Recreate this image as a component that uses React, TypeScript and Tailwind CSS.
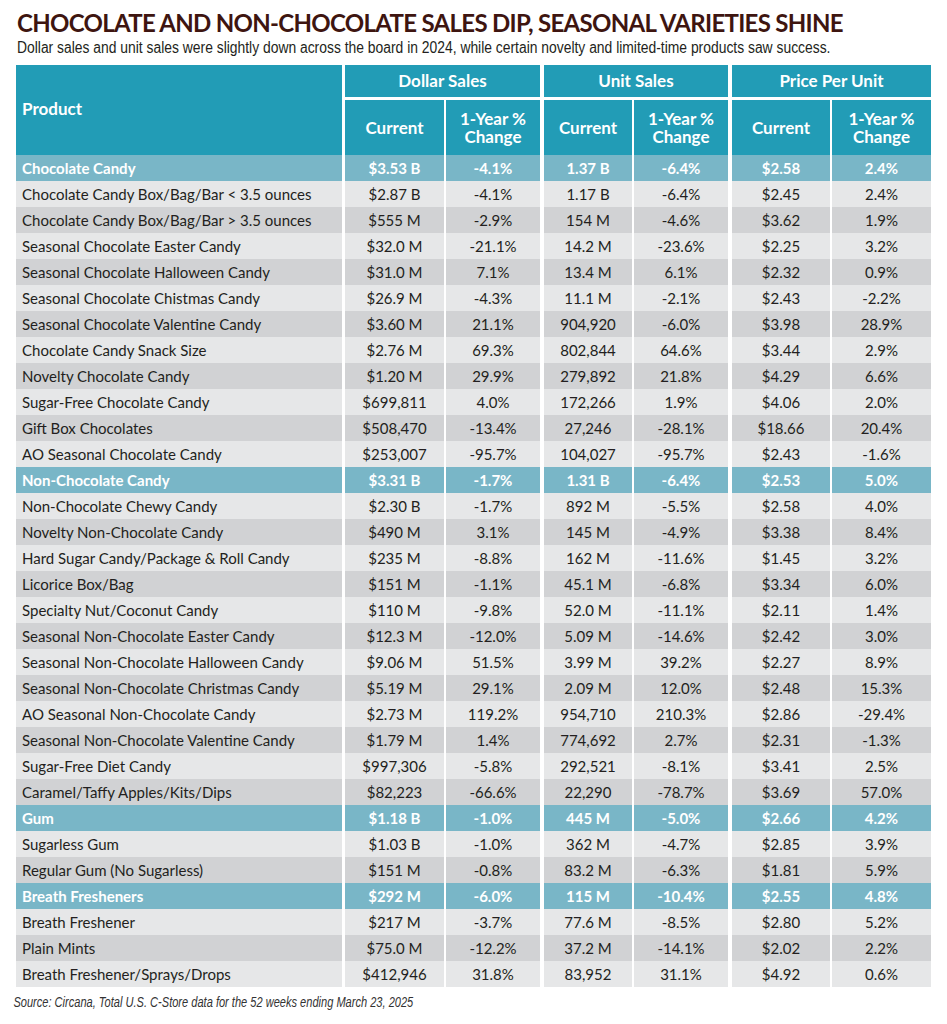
type Row = {
  name: string;
  cells: string[];
  group?: boolean;
};

const rows: Row[] = [
  { name: 'Chocolate Candy', cells: ['$3.53 B', '-4.1%', '1.37 B', '-6.4%', '$2.58', '2.4%'], group: true },
  { name: 'Chocolate Candy Box/Bag/Bar < 3.5 ounces', cells: ['$2.87 B', '-4.1%', '1.17 B', '-6.4%', '$2.45', '2.4%'] },
  { name: 'Chocolate Candy Box/Bag/Bar > 3.5 ounces', cells: ['$555 M', '-2.9%', '154 M', '-4.6%', '$3.62', '1.9%'] },
  { name: 'Seasonal Chocolate Easter Candy', cells: ['$32.0 M', '-21.1%', '14.2 M', '-23.6%', '$2.25', '3.2%'] },
  { name: 'Seasonal Chocolate Halloween Candy', cells: ['$31.0 M', '7.1%', '13.4 M', '6.1%', '$2.32', '0.9%'] },
  { name: 'Seasonal Chocolate Chistmas Candy', cells: ['$26.9 M', '-4.3%', '11.1 M', '-2.1%', '$2.43', '-2.2%'] },
  { name: 'Seasonal Chocolate Valentine Candy', cells: ['$3.60 M', '21.1%', '904,920', '-6.0%', '$3.98', '28.9%'] },
  { name: 'Chocolate Candy Snack Size', cells: ['$2.76 M', '69.3%', '802,844', '64.6%', '$3.44', '2.9%'] },
  { name: 'Novelty Chocolate Candy', cells: ['$1.20 M', '29.9%', '279,892', '21.8%', '$4.29', '6.6%'] },
  { name: 'Sugar-Free Chocolate Candy', cells: ['$699,811', '4.0%', '172,266', '1.9%', '$4.06', '2.0%'] },
  { name: 'Gift Box Chocolates', cells: ['$508,470', '-13.4%', '27,246', '-28.1%', '$18.66', '20.4%'] },
  { name: 'AO Seasonal Chocolate Candy', cells: ['$253,007', '-95.7%', '104,027', '-95.7%', '$2.43', '-1.6%'] },
  { name: 'Non-Chocolate Candy', cells: ['$3.31 B', '-1.7%', '1.31 B', '-6.4%', '$2.53', '5.0%'], group: true },
  { name: 'Non-Chocolate Chewy Candy', cells: ['$2.30 B', '-1.7%', '892 M', '-5.5%', '$2.58', '4.0%'] },
  { name: 'Novelty Non-Chocolate Candy', cells: ['$490 M', '3.1%', '145 M', '-4.9%', '$3.38', '8.4%'] },
  { name: 'Hard Sugar Candy/Package & Roll Candy', cells: ['$235 M', '-8.8%', '162 M', '-11.6%', '$1.45', '3.2%'] },
  { name: 'Licorice Box/Bag', cells: ['$151 M', '-1.1%', '45.1 M', '-6.8%', '$3.34', '6.0%'] },
  { name: 'Specialty Nut/Coconut Candy', cells: ['$110 M', '-9.8%', '52.0 M', '-11.1%', '$2.11', '1.4%'] },
  { name: 'Seasonal Non-Chocolate Easter Candy', cells: ['$12.3 M', '-12.0%', '5.09 M', '-14.6%', '$2.42', '3.0%'] },
  { name: 'Seasonal Non-Chocolate Halloween Candy', cells: ['$9.06 M', '51.5%', '3.99 M', '39.2%', '$2.27', '8.9%'] },
  { name: 'Seasonal Non-Chocolate Christmas Candy', cells: ['$5.19 M', '29.1%', '2.09 M', '12.0%', '$2.48', '15.3%'] },
  { name: 'AO Seasonal Non-Chocolate Candy', cells: ['$2.73 M', '119.2%', '954,710', '210.3%', '$2.86', '-29.4%'] },
  { name: 'Seasonal Non-Chocolate Valentine Candy', cells: ['$1.79 M', '1.4%', '774,692', '2.7%', '$2.31', '-1.3%'] },
  { name: 'Sugar-Free Diet Candy', cells: ['$997,306', '-5.8%', '292,521', '-8.1%', '$3.41', '2.5%'] },
  { name: 'Caramel/Taffy Apples/Kits/Dips', cells: ['$82,223', '-66.6%', '22,290', '-78.7%', '$3.69', '57.0%'] },
  { name: 'Gum', cells: ['$1.18 B', '-1.0%', '445 M', '-5.0%', '$2.66', '4.2%'], group: true },
  { name: 'Sugarless Gum', cells: ['$1.03 B', '-1.0%', '362 M', '-4.7%', '$2.85', '3.9%'] },
  { name: 'Regular Gum (No Sugarless)', cells: ['$151 M', '-0.8%', '83.2 M', '-6.3%', '$1.81', '5.9%'] },
  { name: 'Breath Fresheners', cells: ['$292 M', '-6.0%', '115 M', '-10.4%', '$2.55', '4.8%'], group: true },
  { name: 'Breath Freshener', cells: ['$217 M', '-3.7%', '77.6 M', '-8.5%', '$2.80', '5.2%'] },
  { name: 'Plain Mints', cells: ['$75.0 M', '-12.2%', '37.2 M', '-14.1%', '$2.02', '2.2%'] },
  { name: 'Breath Freshener/Sprays/Drops', cells: ['$412,946', '31.8%', '83,952', '31.1%', '$4.92', '0.6%'] },
];

// widths include the white separator on the left
const cols = [
  'w-[102px] border-l-[3px]',
  'w-[96px] border-l-2',
  'w-[92px] border-l-4',
  'w-[96px] border-l-2',
  'w-[102px] border-l-4',
  'w-[101px] border-l-2',
];

const groups = [
  { title: 'Dollar Sales', a: 'w-[198px] border-l-[3px]', b: ['w-[99px]', 'w-[96px] border-l-2'] },
  { title: 'Unit Sales', a: 'w-[188px] border-l-4', b: ['w-[88px]', 'w-[96px] border-l-2'] },
  { title: 'Price Per Unit', a: 'w-[203px] border-l-4', b: ['w-[98px]', 'w-[101px] border-l-2'] },
];

const Header = () => (
  <div className="flex h-[90px] text-white font-bold text-[17px] leading-[18px]">
    <div className="w-[326px] bg-[#229cb6] flex items-center pl-[6px] pb-[2px]">Product</div>
    {groups.map((g) => (
      <div key={g.title} className={`${g.a} border-white flex flex-col`}>
        <div className="h-[32px] bg-[#229cb6] flex items-center justify-center border-b-[3px] border-white box-content">
          {g.title}
        </div>
        <div className="flex flex-1">
          <div className={`${g.b[0]} bg-[#229cb6] flex items-center justify-center`}>Current</div>
          <div className={`${g.b[1]} border-white bg-[#229cb6] flex flex-col items-center justify-center text-center`}>
            <span className="block">1-Year %</span>
            <span className="block">Change</span>
          </div>
        </div>
      </div>
    ))}
  </div>
);

export default function App() {
  let idx = 0;
  return (
    <div className="w-[947px] h-[1024px] bg-white font-['Lato',sans-serif] text-[#231f20] overflow-hidden">
      <div className="pt-[8px] pl-[17px]">
        <h1 className="text-[24px] leading-[30px] font-bold text-[#3e1510] whitespace-nowrap tracking-[-0.7px]">
          CHOCOLATE AND NON-CHOCOLATE SALES DIP, SEASONAL VARIETIES SHINE
        </h1>
        <p className="font-['Liberation_Sans',sans-serif] text-[16px] leading-[20px] text-[#231f20] whitespace-nowrap origin-left scale-x-[0.867]">
          Dollar sales and unit sales were slightly down across the board in 2024, while certain novelty and limited-time products saw success.
        </p>
      </div>
      <div className="ml-[16px] mt-[7px] w-[915px]">
        <Header />
        {rows.map((r) => {
          if (r.group) idx = 0;
          else idx += 1;
          const bg = r.group ? 'bg-[#79b6c7] text-white font-bold' : idx % 2 === 1 ? 'bg-[#e6e7e8]' : 'bg-[#d1d2d4]';
          return (
            <div key={r.name} className="flex h-[26px] text-[15px] leading-[26px]">
              <div className={`w-[326px] pl-[6px] whitespace-nowrap ${bg}`}>{r.name}</div>
              {r.cells.map((c, i) => (
                <div key={i} className={`${cols[i]} border-white text-center ${bg}`}>
                  {c}
                </div>
              ))}
            </div>
          );
        })}
      </div>
      <p className="pl-[17px] mt-[6px] font-['Liberation_Sans',sans-serif] italic text-[14px] leading-[18px] text-[#333] whitespace-nowrap origin-left scale-x-[0.79]">
        Source: Circana, Total U.S. C-Store data for the 52 weeks ending March 23, 2025
      </p>
    </div>
  );
}
